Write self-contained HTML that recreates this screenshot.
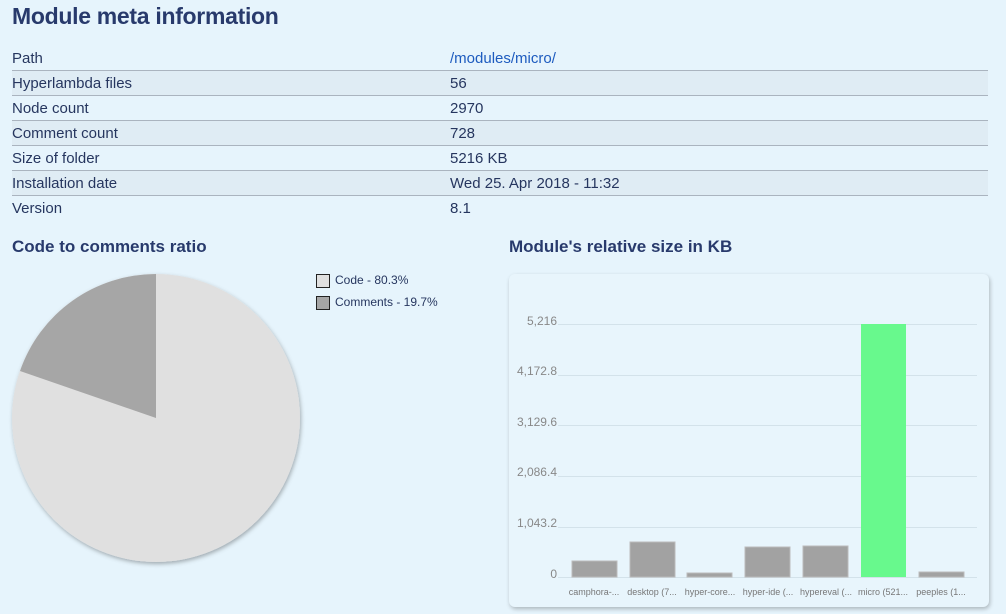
<!DOCTYPE html>
<html><head><style>
body{margin:0;width:1006px;height:614px;background:#e6f4fc;font-family:"Liberation Sans",sans-serif;color:#26365f;position:relative;overflow:hidden}
h1{position:absolute;left:12px;top:3px;margin:0;font-size:23px;font-weight:bold;color:#283a6c;letter-spacing:-0.3px}
table{position:absolute;left:12px;top:46px;width:976px;border-collapse:collapse;font-size:15px}
td{height:24px;padding:0;border-bottom:1px solid #aab4bf;vertical-align:middle}
tr:last-child td{border-bottom:none}
tr.s td{background:#dfecf4}
td.v{padding-left:0}
h2{position:absolute;margin:0;font-size:17px;font-weight:bold;color:#283a6c}
.lg{position:absolute;left:316px;font-size:12px;color:#26365f}
.lg span{display:inline-block;width:14px;height:14px;border:1px solid #222;vertical-align:middle;margin-right:5px;box-sizing:border-box}
.card{position:absolute;left:509px;top:274px;width:480px;height:333px;background:#e8f5fc;border-radius:6px;box-shadow:1px 2px 4px rgba(0,0,0,.25)}
</style></head><body>
<h1>Module meta information</h1>
<table>
<tr><td style="width:438px">Path</td><td style="color:#1d5bbf">/modules/micro/</td></tr>
<tr class="s"><td>Hyperlambda files</td><td>56</td></tr>
<tr><td>Node count</td><td>2970</td></tr>
<tr class="s"><td>Comment count</td><td>728</td></tr>
<tr><td>Size of folder</td><td>5216 KB</td></tr>
<tr class="s"><td>Installation date</td><td>Wed 25. Apr 2018 - 11:32</td></tr>
<tr><td>Version</td><td>8.1</td></tr>
</table>
<h2 style="left:12px;top:237px">Code to comments ratio</h2>
<h2 style="left:509px;top:237px">Module's relative size in KB</h2>
<svg style="position:absolute;left:0;top:260px" width="320" height="320">
<defs><filter id="sh"><feDropShadow dx="1" dy="2" stdDeviation="2" flood-opacity=".3"/></filter></defs>
<g filter="url(#sh)">
<circle cx="156" cy="158" r="144" fill="#e0e0e0"/>
<path d="M156 158 L156 14 A144 144 0 0 0 20 111 Z" fill="#a6a6a6"/>
</g>
</svg>
<div class="lg" style="top:273px"><span style="background:#e0e0e0"></span>Code - 80.3%</div>
<div class="lg" style="top:295px"><span style="background:#a6a6a6"></span>Comments - 19.7%</div>
<div class="card"></div>
<svg style="position:absolute;left:0;top:0" width="1006" height="614" font-family="Liberation Sans" font-size="12" fill="#888">
<g stroke="#d3e2ea" stroke-width="1">
<line x1="558" x2="977" y1="324.5" y2="324.5"/><line x1="558" x2="977" y1="375.5" y2="375.5"/>
<line x1="558" x2="977" y1="425.5" y2="425.5"/><line x1="558" x2="977" y1="476.5" y2="476.5"/>
<line x1="558" x2="977" y1="527.5" y2="527.5"/><line x1="558" x2="977" y1="577.5" y2="577.5"/>
</g>
<g text-anchor="end"><text x="557" y="325">5,216</text><text x="557" y="375">4,172.8</text><text x="557" y="426">3,129.6</text><text x="557" y="476">2,086.4</text><text x="557" y="527">1,043.2</text><text x="557" y="578">0</text></g>
<g fill="#a2a2a2" stroke="#bbb" stroke-width="1">
<rect x="572" y="561" width="45" height="16"/><rect x="630" y="542" width="45" height="35"/>
<rect x="687" y="573" width="45" height="4"/><rect x="745" y="547" width="45" height="30"/>
<rect x="803" y="546" width="45" height="31"/><rect x="919" y="572" width="45" height="5"/>
</g>
<rect x="861" y="324" width="45" height="253" fill="#68f98d"/>
<g font-size="9" text-anchor="middle" fill="#777"><text x="594" y="595">camphora-...</text><text x="652" y="595">desktop (7...</text><text x="710" y="595">hyper-core...</text><text x="768" y="595">hyper-ide (...</text><text x="826" y="595">hypereval (...</text><text x="883" y="595">micro (521...</text><text x="941" y="595">peeples (1...</text></g>
</svg>
</body></html>
